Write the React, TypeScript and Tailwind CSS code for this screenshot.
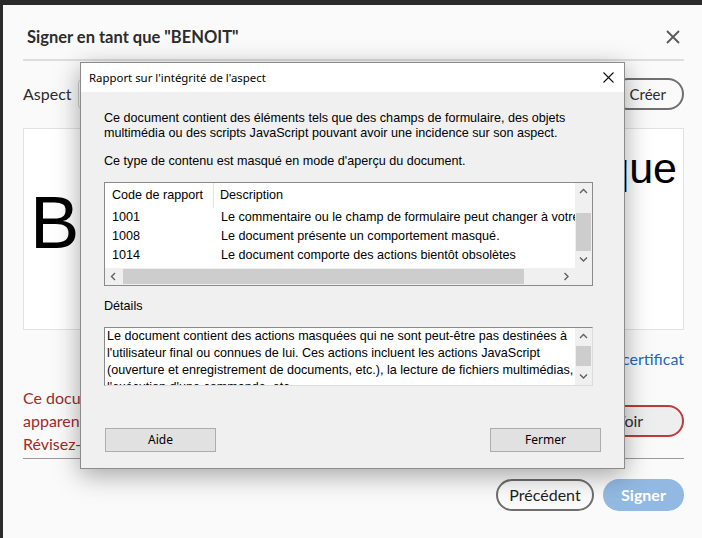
import React from "react";

const ui = { fontFamily: '"Lato", "Noto Sans", sans-serif' };
const win = { fontFamily: '"Liberation Sans", Arial, sans-serif' };
const seg = { fontFamily: '"Noto Sans", "Open Sans", sans-serif' };

function Chevron({ dir }: { dir: "up" | "down" | "left" | "right" }) {
  const d = {
    up: "M1 5 L4.5 1.5 L8 5",
    down: "M1 1.5 L4.5 5 L8 1.5",
    left: "M5 1 L1.5 4.5 L5 8",
    right: "M1.5 1 L5 4.5 L1.5 8",
  }[dir];
  const vertical = dir === "up" || dir === "down";
  return (
    <svg
      width={vertical ? 9 : 7}
      height={vertical ? 7 : 9}
      viewBox={vertical ? "0 0 9 7" : "0 0 7 9"}
      fill="none"
      stroke="#606060"
      strokeWidth="1.4"
    >
      <path d={d} />
    </svg>
  );
}

function VScroll({ thumbTop, thumbHeight }: { thumbTop: number; thumbHeight: number }) {
  return (
    <div className="relative w-[17px] h-full shrink-0 bg-[#f0f0f0] flex flex-col items-center justify-between py-[5px]">
      <Chevron dir="up" />
      <div
        className="absolute left-[1px] right-[1px] bg-[#cdcdcd]"
        style={{ top: thumbTop, height: thumbHeight }}
      />
      <Chevron dir="down" />
    </div>
  );
}

const rows = [
  ["1001", "Le commentaire ou le champ de formulaire peut changer à votre insu."],
  ["1008", "Le document présente un comportement masqué."],
  ["1014", "Le document comporte des actions bientôt obsolètes"],
];

export default function App() {
  return (
    <div className="w-[702px] h-[538px] bg-[#2b2b2b] pl-[3px] pt-[5px] overflow-hidden relative">
      {/* Adobe sign dialog behind */}
      <div className="h-full bg-[#fafafa] pl-[20px] pr-[18px] flex flex-col" style={ui}>
        <div className="flex items-center justify-between pt-[20px] pb-[10px] border-b-2 border-[#dedede]">
          <h1 className="text-[16.5px] font-bold text-[#2c2c2c] pl-[4px] leading-[24px]">
            Signer en tant que "BENOIT"
          </h1>
          <svg width="14" height="14" viewBox="0 0 14 14" className="mr-[4px]" stroke="#5a5a5a" strokeWidth="1.8">
            <path d="M1 1 L13 13 M13 1 L1 13" />
          </svg>
        </div>

        <div className="flex items-center mt-[17px] h-[32px]">
          <span className="text-[16px] text-[#2c2c2c] w-[55px]">Aspect</span>
          <div className="h-[30px] flex-1 border border-[#cfcfcf] rounded-[4px] bg-white mr-[10px]" />
          <button className="h-[32px] px-[16px] border-2 border-[#707070] rounded-full text-[15px] text-[#2c2c2c]">
            Créer
          </button>
        </div>

        <div className="mt-[18px] h-[202px] border border-[#e2e2e2] bg-white flex justify-between overflow-hidden">
          <div className="text-[74px] leading-none text-black pl-[6px] pt-[57px]" style={win}>
            BENOIT
          </div>
          <div className="text-[43px] leading-none text-black pr-[6px] pt-[18px]" style={win}>
            numérique
          </div>
        </div>

        <div className="flex justify-end mt-[18px]">
          <a className="text-[16px] leading-[22px] text-[#2268b8]">Afficher le certificat</a>
        </div>

        <div className="flex items-center justify-between mt-[16px] pb-[3px] border-b border-[#9a9a9a]">
          <p className="text-[16px] leading-[23px] text-[#a12a2c]">
            Ce document contient du contenu dynamique pouvant modifier son
            <br />
            apparence. Le document risque donc de ne pas être fiable.
            <br />
            Révisez-le avant de signer.
          </p>
          <button className="h-[32px] w-[110px] border-2 border-[#c0393b] rounded-full text-[16px] text-[#2c2c2c] bg-[#eeeeee]">
            Voir
          </button>
        </div>

        <div className="flex justify-end gap-[9px] mt-[20px]">
          <button className="h-[32px] w-[98px] border-2 border-[#6e6e6e] rounded-full text-[16px] text-[#1f1f1f]">
            Précédent
          </button>
          <button className="h-[32px] w-[81px] rounded-full bg-[#92b9e1] text-[16px] font-bold text-white">
            Signer
          </button>
        </div>
      </div>

      {/* Windows modal on top */}
      <div className="absolute left-[80px] top-[62px] w-[545px] h-[407px] border border-[#8c8c8c] bg-[#f0f0f0] shadow-[0_6px_24px_rgba(0,0,0,0.35)] flex flex-col">
        <div className="h-[29px] shrink-0 bg-white flex items-center justify-between pl-[8px] pr-[10px]">
          <span className="text-[11.4px] text-black" style={seg}>
            Rapport sur l'intégrité de l'aspect
          </span>
          <svg width="11" height="11" viewBox="0 0 11 11" stroke="#111" strokeWidth="1.1">
            <path d="M0.5 0.5 L10.5 10.5 M10.5 0.5 L0.5 10.5" />
          </svg>
        </div>

        <div className="flex-1 pl-[23px] pr-[21px] pt-[19px] text-[12.6px] text-black" style={win}>
          <p className="leading-[15px] whitespace-nowrap">
            Ce document contient des éléments tels que des champs de formulaire, des objets
            <br />
            multimédia ou des scripts JavaScript pouvant avoir une incidence sur son aspect.
          </p>
          <p className="leading-[15px] mt-[13px]">
            Ce type de contenu est masqué en mode d'aperçu du document.
          </p>

          <div className="mt-[13px] w-[489px] h-[104px] border border-[#8a8a8a] bg-white flex flex-col">
            <div className="flex flex-1 min-h-0">
              <div className="flex-1 min-w-0 overflow-hidden">
                <div className="h-[25px] flex items-center">
                  <div className="w-[109px] shrink-0 h-full flex items-center pl-[7px] border-r border-[#e5e5e5]">
                    Code de rapport
                  </div>
                  <div className="pl-[6px]">Description</div>
                </div>
                {rows.map(([code, desc]) => (
                  <div key={code} className="h-[19px] flex items-center whitespace-nowrap">
                    <div className="w-[109px] pl-[7px] shrink-0">{code}</div>
                    <div className="pl-[7px] shrink-0">{desc}</div>
                  </div>
                ))}
              </div>
              <VScroll thumbTop={30} thumbHeight={38} />
            </div>
            <div className="h-[17px] shrink-0 flex bg-[#f0f0f0]">
              <div className="relative flex-1 flex items-center justify-between px-[5px]">
                <Chevron dir="left" />
                <div className="absolute top-[1px] bottom-[1px] left-[18px] w-[401px] bg-[#cdcdcd]" />
                <Chevron dir="right" />
              </div>
              <div className="w-[17px]" />
            </div>
          </div>

          <p className="mt-[13px] leading-[15px]">Détails</p>

          <div className="mt-[13px] w-[489px] h-[59px] border border-[#8a8a8a] border-r-[#dcdcdc] border-b-[#dcdcdc] bg-white flex overflow-hidden">
            <p className="flex-1 min-w-0 pl-[2px] leading-[17px] whitespace-nowrap overflow-hidden">
              Le document contient des actions masquées qui ne sont peut-être pas destinées à
              <br />
              l'utilisateur final ou connues de lui. Ces actions incluent les actions JavaScript
              <br />
              (ouverture et enregistrement de documents, etc.), la lecture de fichiers multimédias,
              <br />
              l'exécution d'une commande, etc.
            </p>
            <VScroll thumbTop={18} thumbHeight={20} />
          </div>

          <div className="flex justify-between mt-[42px] pl-[1px] pr-[2px]">
            <button className="w-[111px] h-[24px] bg-[#e1e1e1] border border-[#adadad] text-[12px]" style={seg}>
              Aide
            </button>
            <button className="w-[111px] h-[24px] bg-[#e1e1e1] border border-[#adadad] text-[12px]" style={seg}>
              Fermer
            </button>
          </div>
        </div>
      </div>
    </div>
  );
}
